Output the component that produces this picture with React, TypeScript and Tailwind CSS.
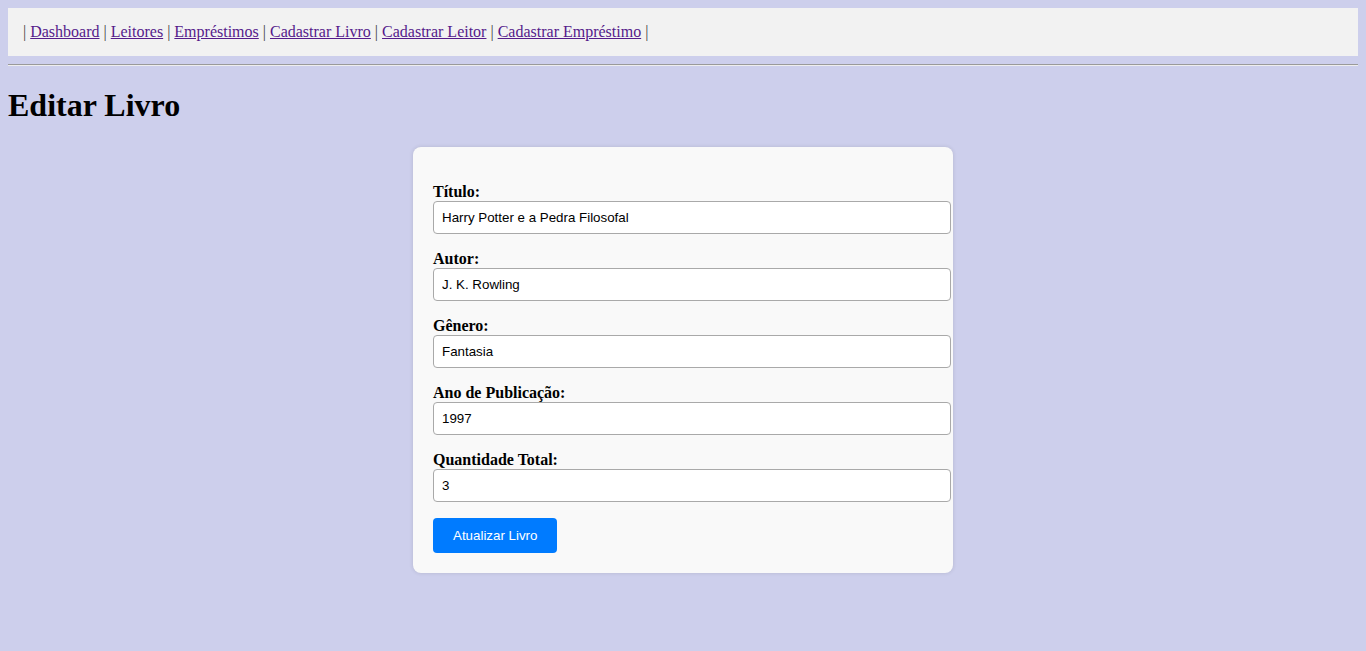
const links = [
  "Dashboard",
  "Leitores",
  "Empréstimos",
  "Cadastrar Livro",
  "Cadastrar Leitor",
  "Cadastrar Empréstimo",
];

const fields = [
  { label: "Título:", value: "Harry Potter e a Pedra Filosofal" },
  { label: "Autor:", value: "J. K. Rowling" },
  { label: "Gênero:", value: "Fantasia" },
  { label: "Ano de Publicação:", value: "1997" },
  { label: "Quantidade Total:", value: "3" },
];

export default function App() {
  return (
    <div className="min-h-[651px] bg-[#cdcfec] p-2 font-['Liberation_Serif',serif] text-base text-black">
      {/* top menu */}
      <nav className="bg-[#f2f2f2] px-[15px] py-[15px] leading-[18px]">
        <span className="text-[#444]">| </span>
        {links.map((l) => (
          <span key={l}>
            <a href="#" className="text-[#551a8b] underline">
              {l}
            </a>
            <span className="text-[#444]"> | </span>
          </span>
        ))}
      </nav>
      <div className="my-2 border-t border-b border-t-[#9a9a9a] border-b-[#eeeeee]" />

      <h1 className="mb-[23px] mt-[21px] text-[32px] font-bold leading-[37px]">Editar Livro</h1>

      <form className="mx-auto w-[540px] rounded-lg bg-[#f9f9f9] px-5 pb-5 pt-9 shadow-[0_0_4px_rgba(0,0,0,0.12)]">
        {fields.map((f) => (
          <div key={f.label} className="mb-4">
            <label className="block font-bold leading-[18px]">{f.label}</label>
            <input
              type="text"
              defaultValue={f.value}
              className="block h-[33px] w-[518px] rounded border border-[#a9a9a9] bg-white px-2 font-['Liberation_Sans',sans-serif] text-[13.33px] text-black outline-none"
            />
          </div>
        ))}
        <button
          type="button"
          className="h-[35px] rounded bg-[#007bff] px-5 font-['Liberation_Sans',sans-serif] text-[13.33px] text-white"
        >
          Atualizar Livro
        </button>
      </form>
    </div>
  );
}
